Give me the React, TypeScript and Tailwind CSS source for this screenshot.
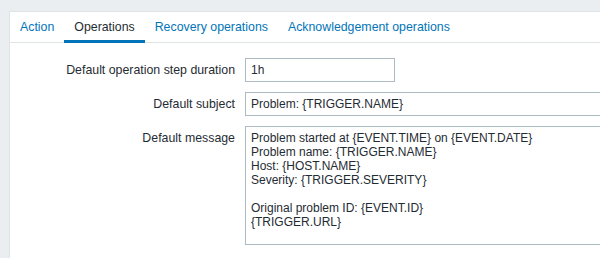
import { useState } from 'react';

const tabs = ['Action', 'Operations', 'Recovery operations', 'Acknowledgement operations'];

const message = [
  'Problem started at {EVENT.TIME} on {EVENT.DATE}',
  'Problem name: {TRIGGER.NAME}',
  'Host: {HOST.NAME}',
  'Severity: {TRIGGER.SEVERITY}',
  '',
  'Original problem ID: {EVENT.ID}',
  '{TRIGGER.URL}',
].join('\n');

const FormRow = ({ label, children }: { label: string; children: React.ReactNode }) => (
  <div className="flex items-start gap-[10px]">
    <label className="w-[225px] shrink-0 text-right text-[12.35px] leading-[24px]">{label}</label>
    {children}
  </div>
);

export default function App() {
  const [active, setActive] = useState(1);
  const [duration, setDuration] = useState('1h');
  const [subject, setSubject] = useState('Problem: {TRIGGER.NAME}');
  const [body, setBody] = useState(message);

  return (
    <div className="h-[258px] overflow-hidden bg-[#ebeef0] pt-[11px] pl-[9px] font-['Liberation_Sans',Arial,sans-serif] text-[12px] text-[#1f2c33]">
      <div className="h-full w-[700px] border border-r-0 border-b-0 border-[#dfe4e7] bg-white">
        <ul className="flex h-[31px] border-b border-[#dfe4e7] text-[12.35px]">
          {tabs.map((tab, i) => (
            <li
              key={tab}
              onClick={() => setActive(i)}
              className={
                i === active
                  ? 'relative cursor-pointer px-[10px] leading-[30px] text-[#1f2c33]'
                  : 'cursor-pointer px-[10px] leading-[30px] text-[#0275b8]'
              }
            >
              {tab}
              {i === active && <span className="absolute right-0 bottom-[-1px] left-0 h-[3px] bg-[#0275b8]" />}
            </li>
          ))}
        </ul>

        <div className="flex flex-col gap-[10px] pt-[15px]">
          <FormRow label="Default operation step duration">
            <input
              value={duration}
              onChange={(e) => setDuration(e.target.value)}
              className="h-[24px] w-[150px] border border-[#acbbc2] px-[5px] outline-none"
            />
          </FormRow>
          <FormRow label="Default subject">
            <input
              value={subject}
              onChange={(e) => setSubject(e.target.value)}
              className="h-[24px] w-[450px] border border-[#acbbc2] px-[5px] outline-none"
            />
          </FormRow>
          <FormRow label="Default message">
            <textarea
              value={body}
              onChange={(e) => setBody(e.target.value)}
              className="h-[119px] w-[450px] resize-none border border-[#acbbc2] px-[5px] pt-[4px] leading-[14px] outline-none"
            />
          </FormRow>
        </div>
      </div>
    </div>
  );
}
